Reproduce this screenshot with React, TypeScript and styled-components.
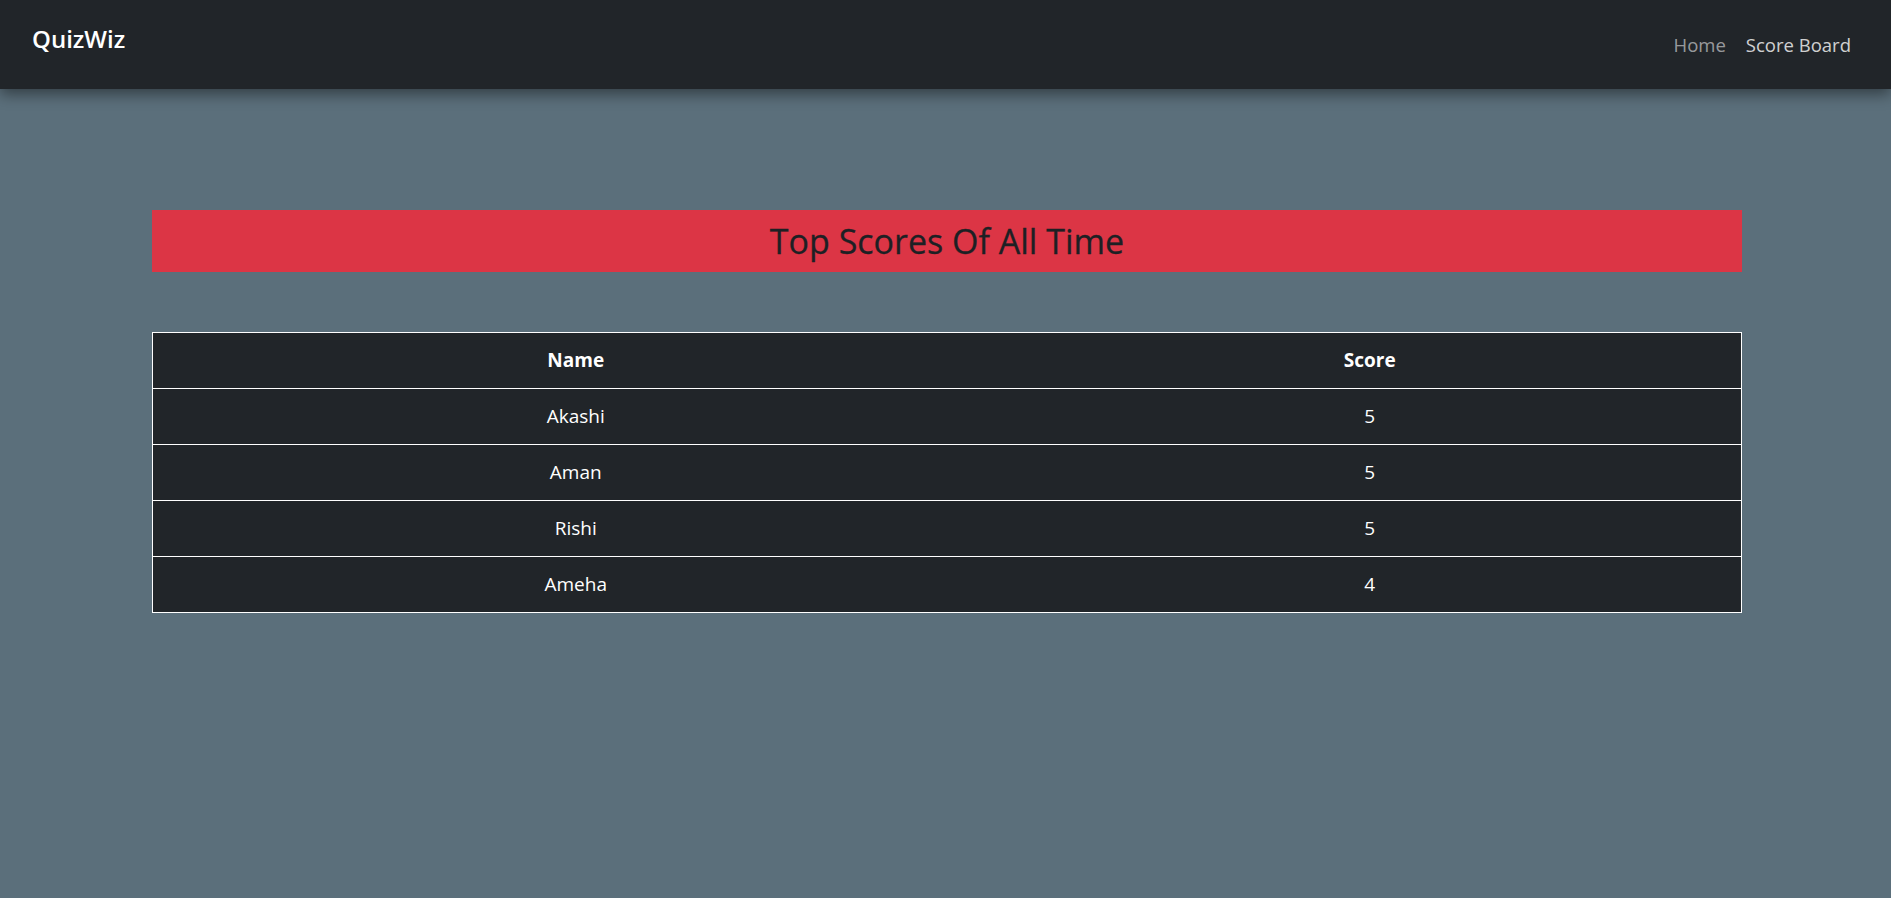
import React from "react";
import styled, { createGlobalStyle } from "styled-components";

const Global = createGlobalStyle`
  html, body { margin: 0; padding: 0; }
  body {
    background: #5b6f7b;
    font-family: "Open Sans", "Noto Sans", sans-serif;
    min-height: 898px;
  }
`;

const NavBar = styled.header`
  height: 89px;
  background: #212529;
  display: flex;
  align-items: center;
  justify-content: space-between;
  padding: 0 40px 0 32px;
  box-shadow: 0 5px 14px rgba(0, 0, 0, 0.45);
  position: relative;
  z-index: 1;
  box-sizing: border-box;
`;

const Brand = styled.a`
  color: #fff;
  font-size: 24px;
  font-weight: 600;
  text-decoration: none;
  margin-top: -12px;
`;

const NavLinks = styled.nav`
  display: flex;
  gap: 20px;
`;

const NavLink = styled.a<{ $active?: boolean }>`
  color: ${(p) => (p.$active ? "rgba(255,255,255,0.8)" : "rgba(255,255,255,0.55)")};
  font-size: 18.5px;
  text-decoration: none;
`;

const Main = styled.main`
  padding: 121px 149px 0 152px;
  display: flex;
  flex-direction: column;
  gap: 60px;
`;

const Banner = styled.h2`
  margin: 0;
  background: #dc3545;
  color: #1d2024;
  text-align: center;
  font-size: 34px;
  font-weight: 500;
  line-height: 38px;
  padding: 12px 0;
  -webkit-text-stroke: 0.3px #1d2024;
`;

const Table = styled.table`
  width: 100%;
  table-layout: fixed;
  border-collapse: collapse;
  border: 1px solid #fff;
  background: #212529;
  color: #fff;
  font-size: 19px;
`;

const NameCol = styled.col`
  width: 846px;
`;

const Th = styled.th`
  border-bottom: 1px solid #fff;
  padding: 15px 8px 16px;
  line-height: 24px;
  font-weight: 700;
  text-align: center;
`;

const Td = styled.td`
  border-bottom: 1px solid #fff;
  padding: 15px 8px 16px;
  line-height: 24px;
  text-align: center;
`;

const rows = [
  { name: "Akashi", score: 5 },
  { name: "Aman", score: 5 },
  { name: "Rishi", score: 5 },
  { name: "Ameha", score: 4 },
];

export default function App() {
  return (
    <>
      <Global />
      <NavBar>
        <Brand href="#">QuizWiz</Brand>
        <NavLinks>
          <NavLink href="#">Home</NavLink>
          <NavLink href="#" $active>
            Score Board
          </NavLink>
        </NavLinks>
      </NavBar>
      <Main>
        <Banner>Top Scores Of All Time</Banner>
        <Table>
          <colgroup>
            <NameCol />
            <col />
          </colgroup>
          <thead>
            <tr>
              <Th>Name</Th>
              <Th>Score</Th>
            </tr>
          </thead>
          <tbody>
            {rows.map((r) => (
              <tr key={r.name}>
                <Td>{r.name}</Td>
                <Td>{r.score}</Td>
              </tr>
            ))}
          </tbody>
        </Table>
      </Main>
    </>
  );
}
